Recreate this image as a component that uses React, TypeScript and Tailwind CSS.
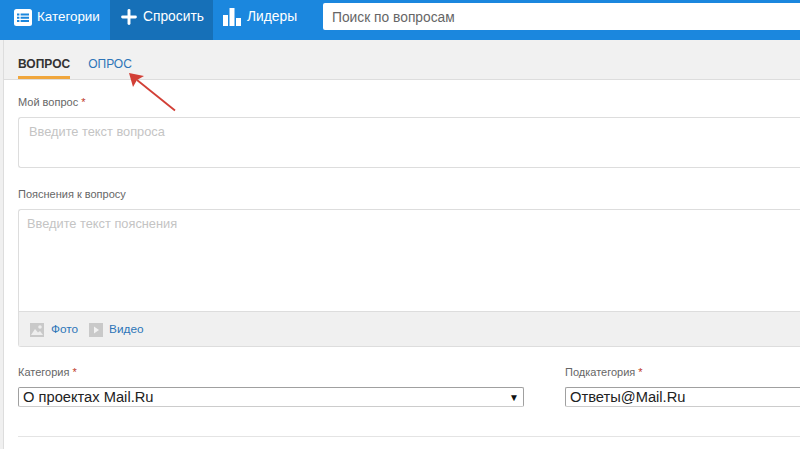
import React from "react";
import { Plus } from "lucide-react";

const font = "[font-family:Arial,'Liberation_Sans',sans-serif]";

function CategoryIcon() {
  return <svg width="18" height="17" viewBox="0 0 18 17" className="shrink-0">
    <rect width="18" height="17" rx="2.5" fill="#fff" />
    <path d="M3 4.500h2.400v2H3zM6.600 4.500H15v2H6.600zM3 7.800h2.400v2H3zM6.600 7.800H15v2H6.600zM3 11.100h2.400v2H3zM6.600 11.100H15v2H6.600z" fill="#1b87de" />
  </svg>;
}

function BarsIcon() {
  return <svg width="18" height="18" viewBox="0 0 18 18" className="shrink-0">
    <path d="M0 7h5v11H0zM6.500 0h5v18h-5zM13 10h5v8h-5z" fill="#fff" />
  </svg>;
}

function Arrow() {
  return <svg width="56" height="42" viewBox="0 0 56 42" className="absolute left-[125px] top-[70px]">
    <path d="M50 40.500 L12 10" stroke="#d23f36" strokeWidth="1.800" fill="none" />
    <path d="M4 3 L19 6 L12 10 L8 17 Z" fill="#d23f36" />
  </svg>;
}

function Label({ text }: { text: string }) {
  return <div className="text-[11px] leading-[14px] text-[#666]">{text} <span className="text-[#c0392b]">*</span></div>;
}

function FakeSelect({ text, arrow, className }: { text: string; arrow?: boolean; className: string }) {
  return <div className={`h-[20px] border border-[#a0a0a0] border-b-[#ccc] rounded-[2px] flex items-center justify-between pl-[4px] pr-[4px] text-[14.700px] text-[#222] bg-white ${className}`}>
    <span>{text}</span>
    {arrow && <span className="text-[10px] text-[#111]">▼</span>}
  </div>;
}

export default function App() {
  return <div className={`relative w-[800px] h-[449px] overflow-hidden bg-white flex flex-col ${font}`}>
    <header className="h-[40px] shrink-0 bg-[#1b87de] flex items-stretch text-white text-[13.400px] font-medium">
      <a className="w-[110px] flex items-center pb-[6px] pl-[14px] gap-[5px]"><CategoryIcon />Категории</a>
      <a className="w-[103px] bg-[#1670b8] flex items-center pb-[6px] pl-[8px] gap-[3px] text-[13.800px]"><Plus size={22} strokeWidth={3.200} className="shrink-0" />Спросить</a>
      <a className="w-[110px] flex items-center pb-[6px] pl-[10px] gap-[6px] text-[13.800px]"><BarsIcon />Лидеры</a>
      <div className="flex-1 pt-[3px]">
        <div className="h-[27px] bg-white rounded-l-[2px] flex items-center pl-[9px] pt-[3px] text-[#666] text-[13.800px]">Поиск по вопросам</div>
      </div>
    </header>
    <div className="flex-1 flex min-h-0">
      <div className="w-[4px] shrink-0 bg-[#f0f0f0] border-r border-[#ddd]" />
      <main className="flex-1 min-w-0">
        <div className="h-[40px] bg-[#f1f1f1] border-b border-[#ddd] flex items-end pl-[14px] gap-[18px] text-[12px]">
          <div className="h-[39px] flex items-center border-b-[3px] border-[#f0a63c] font-bold text-[#333] pt-[12px]">ВОПРОС</div>
          <div className="h-[39px] flex items-center text-[#2d75b8] pt-[12px] pb-[3px]">ОПРОС</div>
        </div>
        <div className="pl-[14px] pt-[15px]">
          <Label text="Мой вопрос" />
          <div className="mt-[8px] h-[51px] border border-[#ddd] border-r-0 rounded-l-[3px] pl-[10px] pt-[4px] text-[12.800px] text-[#c4c4c4]">Введите текст вопроса</div>
          <div className="mt-[19px] text-[11px] leading-[14px] text-[#666]">Пояснения к вопросу</div>
          <div className="mt-[8px] h-[138px] border border-[#ddd] border-r-0 rounded-l-[3px] flex flex-col">
            <div className="flex-1 pl-[8px] pt-[4px] text-[12.800px] text-[#c4c4c4]">Введите текст пояснения</div>
            <div className="h-[35px] bg-[#f0f0f0] border-t border-[#ddd] flex items-center pl-[11px] pt-[1px] text-[11.800px] text-[#2d75b8]">
              <svg width="14" height="14" viewBox="0 0 14 14" className="shrink-0">
                <rect width="14" height="14" fill="#c9c9c9" />
                <circle cx="10" cy="4" r="1.800" fill="#eee" />
                <path d="M1 12 L5 6 L8 9.500 L10 8 L13 12 Z" fill="#eee" />
              </svg>
              <span className="ml-[7px]">Фото</span>
              <svg width="14" height="14" viewBox="0 0 14 14" className="shrink-0 ml-[11px]">
                <rect width="14" height="14" fill="#c9c9c9" />
                <path d="M5 3.500 L10 7 L5 10.500 Z" fill="#f2f2f2" />
              </svg>
              <span className="ml-[6px]">Видео</span>
            </div>
          </div>
          <div className="mt-[18px] flex">
            <div className="w-[506px] shrink-0">
              <Label text="Категория" />
              <FakeSelect text="О проектах Mail.Ru" arrow className="mt-[8px]" />
            </div>
            <div className="ml-[41px] flex-1">
              <Label text="Подкатегория" />
              <FakeSelect text="Ответы@Mail.Ru" className="mt-[8px] border-r-0 rounded-r-none" />
            </div>
          </div>
          <div className="mt-[29px] border-t border-[#e4e4e4]" />
        </div>
      </main>
    </div>
    <Arrow />
  </div>;
}
